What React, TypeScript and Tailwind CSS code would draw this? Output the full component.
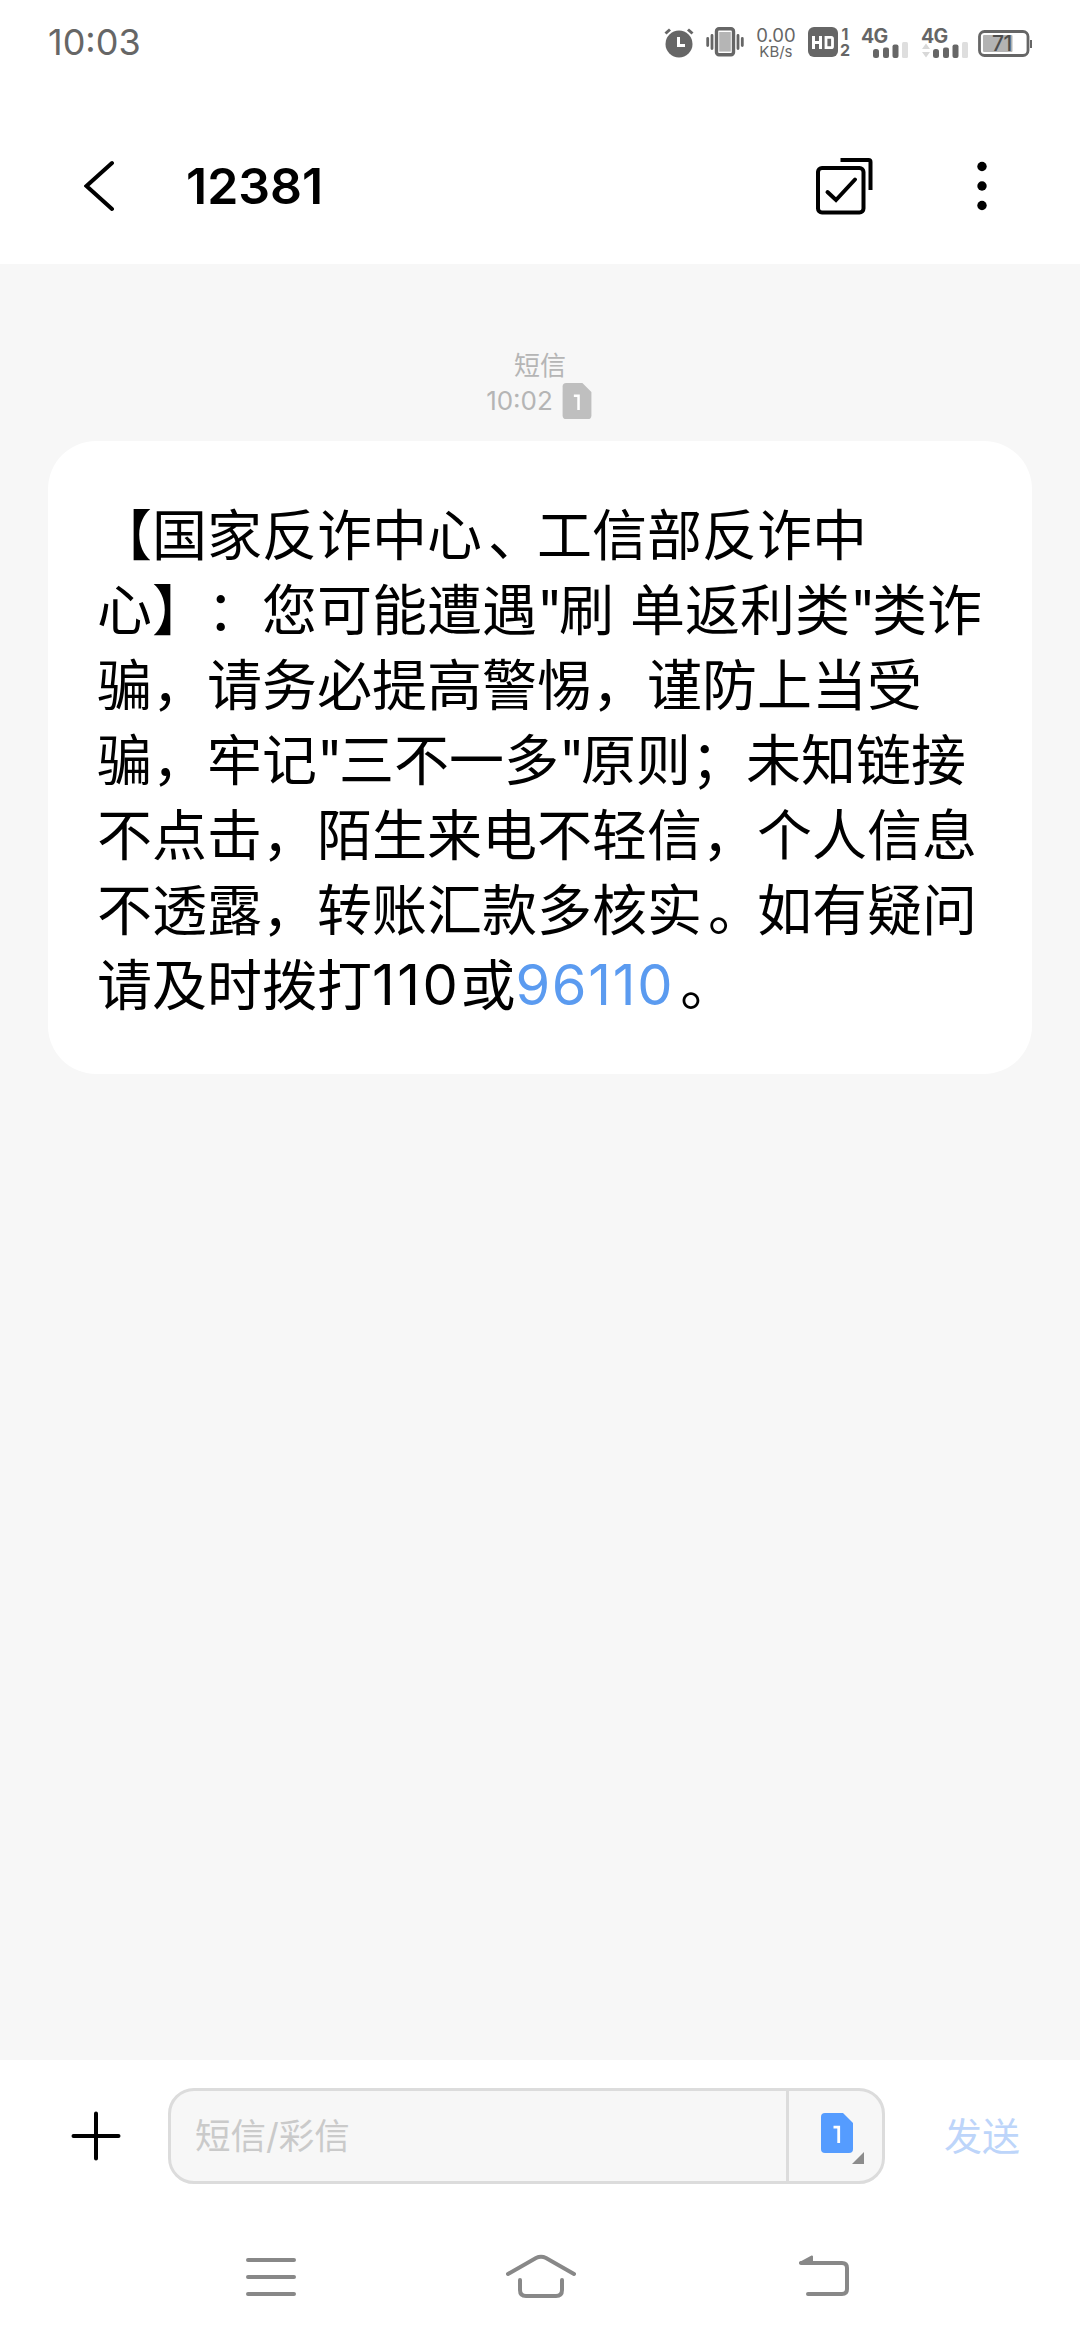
import type { ReactNode } from "react";

const AlarmIcon = () => (
  <svg width="30" height="31" viewBox="0 0 30 31" fill="none">
    <circle cx="15" cy="17" r="13.5" fill="#666" />
    <path d="M1.5 6.5 6 2.5M28.5 6.5 24 2.5" stroke="#666" strokeWidth="3" />
    <path d="M14.5 10v8.5H21" stroke="#fff" strokeWidth="3" />
  </svg>
);

const VibrateIcon = () => (
  <svg width="38" height="30" viewBox="0 0 38 30" fill="none">
    <rect x="10.5" y="1.8" width="17" height="26" rx="2.5" stroke="#666" strokeWidth="3.4" />
    <rect x="13.2" y="5" width="11.6" height="19.6" fill="#b5b5b5" />
    <path
      d="M6 8.5v13M32 8.5v13M1.7 11.5v7M36.3 11.5v7"
      stroke="#666"
      strokeWidth="2.8"
      strokeLinecap="round"
    />
  </svg>
);

const HdIcon = () => (
  <svg width="30" height="30" viewBox="0 0 30 30" fill="none">
    <rect width="30" height="30" rx="6" fill="#666" />
    <path d="M5.5 9v13M12.5 9v13M5.5 15.5h7" stroke="#fff" strokeWidth="3" />
    <path d="M18 10.3h5.2q1.3 0 1.3 1.3v7.8q0 1.3-1.3 1.3H18z" stroke="#fff" strokeWidth="2.8" />
  </svg>
);

const SignalIcon = ({ arrows }: { arrows?: boolean }) => (
  <svg width="48" height="40" viewBox="0 -6 48 40" fill="#666">
    <text x="0" y="14.5" fontFamily="Inter" fontWeight="700" fontSize="19.5" letterSpacing="-0.8">
      4G
    </text>
    {arrows && <path d="M5 15.5l4 5.5H1zM5 29.5l4-5.5H1z" fill="#d8d8d8" />}
    <rect x="12" y="21" width="6" height="9" rx="2.5" />
    <rect x="22" y="19.5" width="6" height="10.5" rx="2" />
    <rect x="31.5" y="16.5" width="6" height="13.5" rx="2" />
    <rect x="41" y="14" width="6" height="16" rx="1.5" fill="#dedede" />
  </svg>
);

const BatteryIcon = () => (
  <svg width="54" height="27" viewBox="0 0 54 27" fill="none">
    <rect x="1.5" y="1.5" width="48.5" height="24" rx="5" stroke="#666" strokeWidth="2.8" />
    <rect x="5" y="5" width="29.5" height="17" rx="1" fill="#b3b3b3" />
    <path d="M53 10v8" stroke="#666" strokeWidth="2" />
    <text x="14" y="21" fontFamily="Inter" fontWeight="500" fontSize="21" letterSpacing="-0.6" fill="#4d4d4d">
      71
    </text>
  </svg>
);

const SimIcon = ({ className }: { className: string }) => (
  <svg viewBox="0 0 32 40" className={className} fill="currentColor">
    <path d="M4 0h18l10 10v26a4 4 0 0 1-4 4H4a4 4 0 0 1-4-4V4a4 4 0 0 1 4-4z" />
    <path d="M12.5 14.2h5.2V30" stroke="#fff" strokeWidth="2.8" fill="none" />
  </svg>
);

const StatusBar = () => (
  <div className="flex h-[84px] items-center justify-between px-[48px] text-[#666]">
    <span className="text-[36px] leading-none">10:03</span>
    <div className="flex items-center">
      <AlarmIcon />
      <div className="ml-[12px]">
        <VibrateIcon />
      </div>
      <div className="ml-[12px] flex w-[40px] flex-col items-center pt-[1px]">
        <span className="text-[18.5px] leading-[18px]">0.00</span>
        <span className="text-[15px] leading-[16px]">KB/s</span>
      </div>
      <div className="ml-[12px]">
        <HdIcon />
      </div>
      <div className="ml-[2px] flex flex-col items-center text-[16px] leading-[16px] font-bold">
        <span>1</span>
        <span>2</span>
      </div>
      <div className="ml-[11px]">
        <SignalIcon />
      </div>
      <div className="ml-[12px]">
        <SignalIcon arrows />
      </div>
      <div className="mt-[2px] ml-[9px]">
        <BatteryIcon />
      </div>
    </div>
  </div>
);

const Header = () => (
  <div className="flex h-[180px] items-center pt-[24px] pr-[93px] pl-[84px]">
    <svg width="32" height="52" viewBox="0 0 32 52" fill="none" stroke="#000" strokeWidth="4">
      <path d="M28 3 2.5 26 28 49" strokeLinecap="round" />
    </svg>
    <h1 className="ml-[70px] flex-1 text-[50px] leading-none font-semibold">12381</h1>
    <svg width="60" height="60" viewBox="0 0 60 60" fill="none" stroke="#000" strokeWidth="4">
      <rect x="3" y="12" width="45.5" height="44.5" rx="4" />
      <path d="M12.5 36l8.5 8 19-20.5" strokeLinecap="round" />
      <path d="M25.5 4h28q2 0 2 2v28" />
    </svg>
    <svg width="10" height="50" viewBox="0 0 10 50" className="ml-[102px]">
      <circle cx="5" cy="5.5" r="4.7" />
      <circle cx="5" cy="25" r="4.7" />
      <circle cx="5" cy="44.5" r="4.7" />
    </svg>
  </div>
);

const Quote = () => <span className="inline-block w-[22px] text-center">"</span>;

// Full-width punctuation, pushed a little into its cell
const Mark = ({ children }: { children: string }) => (
  <span className="inline-block w-[55px] pl-[6px] tracking-[-6px]">{children}</span>
);

const lines: ReactNode[] = [
  <>
    【国家反诈中心<Mark>、</Mark>工信部反诈中
  </>,
  <>
    心】<span className="inline-block w-[55px]">：</span>您可能遭遇
    <Quote />刷<span className="inline-block w-[16px]" />单返利类
    <Quote />
    类诈
  </>,
  "骗，请务必提高警惕，谨防上当受",
  <>
    骗，牢记
    <Quote />
    三不一多
    <Quote />
    原则；未知链接
  </>,
  "不点击，陌生来电不轻信，个人信息",
  <>
    不透露，转账汇款多核实<Mark>。</Mark>如有疑问
  </>,
  <>
    请及时拨打<span className="text-[56px] tracking-[2.5px]">110</span>或
    <span className="text-[56px] tracking-[1.7px] text-[#5b9bf0]">96110</span>
    <Mark>。</Mark>
  </>,
];

const Messages = () => (
  <div className="flex-1 bg-[#f7f7f7] px-[48px] pt-[86px]">
    <div className="flex flex-col items-center text-[#b5b5b5]">
      <span className="text-[26px] leading-[32px]">短信</span>
      <div className="flex items-center pr-[2px]">
        <span className="text-[26px] leading-[38px]">10:02</span>
        <SimIcon className="ml-[9px] h-[36px] w-[30px] text-[#bfbfbf]" />
      </div>
    </div>
    <div className="mt-[21px] h-[633px] rounded-[48px] bg-white pt-[57px] pl-[49px]">
      {lines.map((line, index) => (
        <p
          key={index}
          className="h-[75px] text-[55px] leading-[75px] whitespace-nowrap [text-spacing-trim:space-all]"
        >
          {line}
        </p>
      ))}
    </div>
  </div>
);

const Composer = () => (
  <div className="flex h-[152px] items-center pl-[71px]">
    <svg width="50" height="50" viewBox="0 0 50 50" stroke="#000" strokeWidth="4" strokeLinecap="round">
      <path d="M25 2.5v45M2.5 25h45" />
    </svg>
    <div className="ml-[47px] flex h-[96px] w-[717px] rounded-[26px] border-[3px] border-[#dcdcdc] bg-[#f7f7f7]">
      <div className="flex flex-1 items-center pt-[2px] pl-[24px] text-[35.5px] text-[#cacaca]">
        短信/彩信
      </div>
      <div className="relative flex w-[96px] items-center border-l-[3px] border-[#dcdcdc] pb-[6px] pl-[32px]">
        <SimIcon className="h-[40px] w-[32px] text-[#559cff]" />
        <svg width="12" height="12" viewBox="0 0 12 12" className="absolute right-[18px] bottom-[17px]">
          <path d="M12 0v12H0z" fill="#8c8c8c" />
        </svg>
      </div>
    </div>
    <span className="ml-[59px] text-[38px] text-[#bdd5fa]">发送</span>
  </div>
);

const NavBar = () => (
  <div className="flex h-[128px] items-center pl-[246px]">
    <svg width="50" height="44" viewBox="0 0 50 44" stroke="#888" strokeWidth="4" strokeLinecap="round">
      <path d="M2 6h46M2 23h46M2 40h46" />
    </svg>
    <svg
      width="70"
      height="44"
      viewBox="0 0 70 44"
      fill="none"
      stroke="#888"
      strokeWidth="4"
      strokeLinecap="round"
      className="ml-[210px]"
    >
      <path d="M2 20 30 4q5-2.5 10 0l28 16" />
      <path d="M14 26v10q0 6 6 6h30q6 0 6-6V26" />
    </svg>
    <svg
      width="52"
      height="44"
      viewBox="0 0 52 44"
      fill="none"
      stroke="#888"
      strokeWidth="4"
      strokeLinecap="round"
      className="ml-[222px]"
    >
      <path d="M3 9h41q5 0 5 5v21q0 5-5 5H10" />
      <path d="M2 9 14 2.5V9z" fill="#888" strokeWidth="2" strokeLinejoin="round" />
    </svg>
  </div>
);

const App = () => {
  return (
    <div className="flex h-[2340px] w-[1080px] flex-col overflow-hidden bg-white font-[Inter,'Noto_Sans_CJK_SC',sans-serif] text-black">
      <StatusBar />
      <Header />
      <Messages />
      <Composer />
      <NavBar />
    </div>
  );
};

export default App;
